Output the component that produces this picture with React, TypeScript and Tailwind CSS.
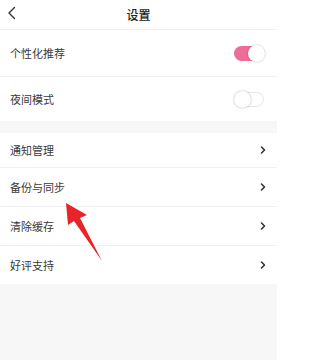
import React from "react";

const Chevron = () => (
  <svg width="8" height="10" viewBox="0 0 8 10" className="mr-[10px]">
    <path d="M2.5 2 L5.5 5 L2.5 8" fill="none" stroke="#333" strokeWidth="1.6" strokeLinecap="round" strokeLinejoin="round" />
  </svg>
);

const Toggle = ({ on }: { on: boolean }) =>
  on ? (
    <div className="mr-[13px] w-[30px] h-[15px] rounded-full bg-[#ec6d96] relative">
      <div className="absolute right-[-1px] top-[-1px] w-[17px] h-[17px] rounded-full bg-white shadow-[0_0_2px_rgba(0,0,0,0.3)]" />
    </div>
  ) : (
    <div className="mr-[13px] w-[30px] h-[15px] rounded-full bg-white border border-[#e6e6e6] relative">
      <div className="absolute left-[-1px] top-[-2px] w-[17px] h-[17px] rounded-full bg-white shadow-[0_0_2px_rgba(0,0,0,0.35)]" />
    </div>
  );

const Row = ({ label, h, border, right }: { label: string; h: string; border?: boolean; right: React.ReactNode }) => (
  <div className={`${h} flex items-center justify-between bg-white ${border ? "border-b border-[#f2f2f2]" : ""}`}>
    <span className="pl-[10px] text-[11px] text-[#3a3a3a]">{label}</span>
    {right}
  </div>
);

export default function App() {
  return (
    <div
      className="relative w-[277px] h-[360px] bg-[#f7f7f7] overflow-hidden"
      style={{ fontFamily: '"Noto Sans CJK SC", "Noto Sans", sans-serif' }}
    >
      <div className="h-[30px] bg-white border-b border-[#f0f0f0] flex items-center relative">
        <svg width="10" height="14" viewBox="0 0 10 14" className="absolute left-[7px] top-[6px]">
          <path d="M7.5 1.5 L2 7 L7.5 12.5" fill="none" stroke="#333" strokeWidth="1.4" strokeLinecap="round" strokeLinejoin="round" />
        </svg>
        <div className="w-full text-center text-[12px] font-medium text-[#222]">设置</div>
      </div>
      <Row label="个性化推荐" h="h-[47px]" border right={<Toggle on />} />
      <Row label="夜间模式" h="h-[44px]" right={<Toggle on={false} />} />
      <div className="h-[12px]" />
      <Row label="通知管理" h="h-[35px]" border right={<Chevron />} />
      <Row label="备份与同步" h="h-[39px]" border right={<Chevron />} />
      <Row label="清除缓存" h="h-[39px]" border right={<Chevron />} />
      <Row label="好评支持" h="h-[38px]" right={<Chevron />} />
      <svg className="absolute left-0 top-0 pointer-events-none" width="277" height="360" viewBox="0 0 277 360">
        <path d="M66 203 L87 215 L80 218 L102 261 L74 221 L68 225 Z" fill="#e8232a" />
      </svg>
    </div>
  );
}
